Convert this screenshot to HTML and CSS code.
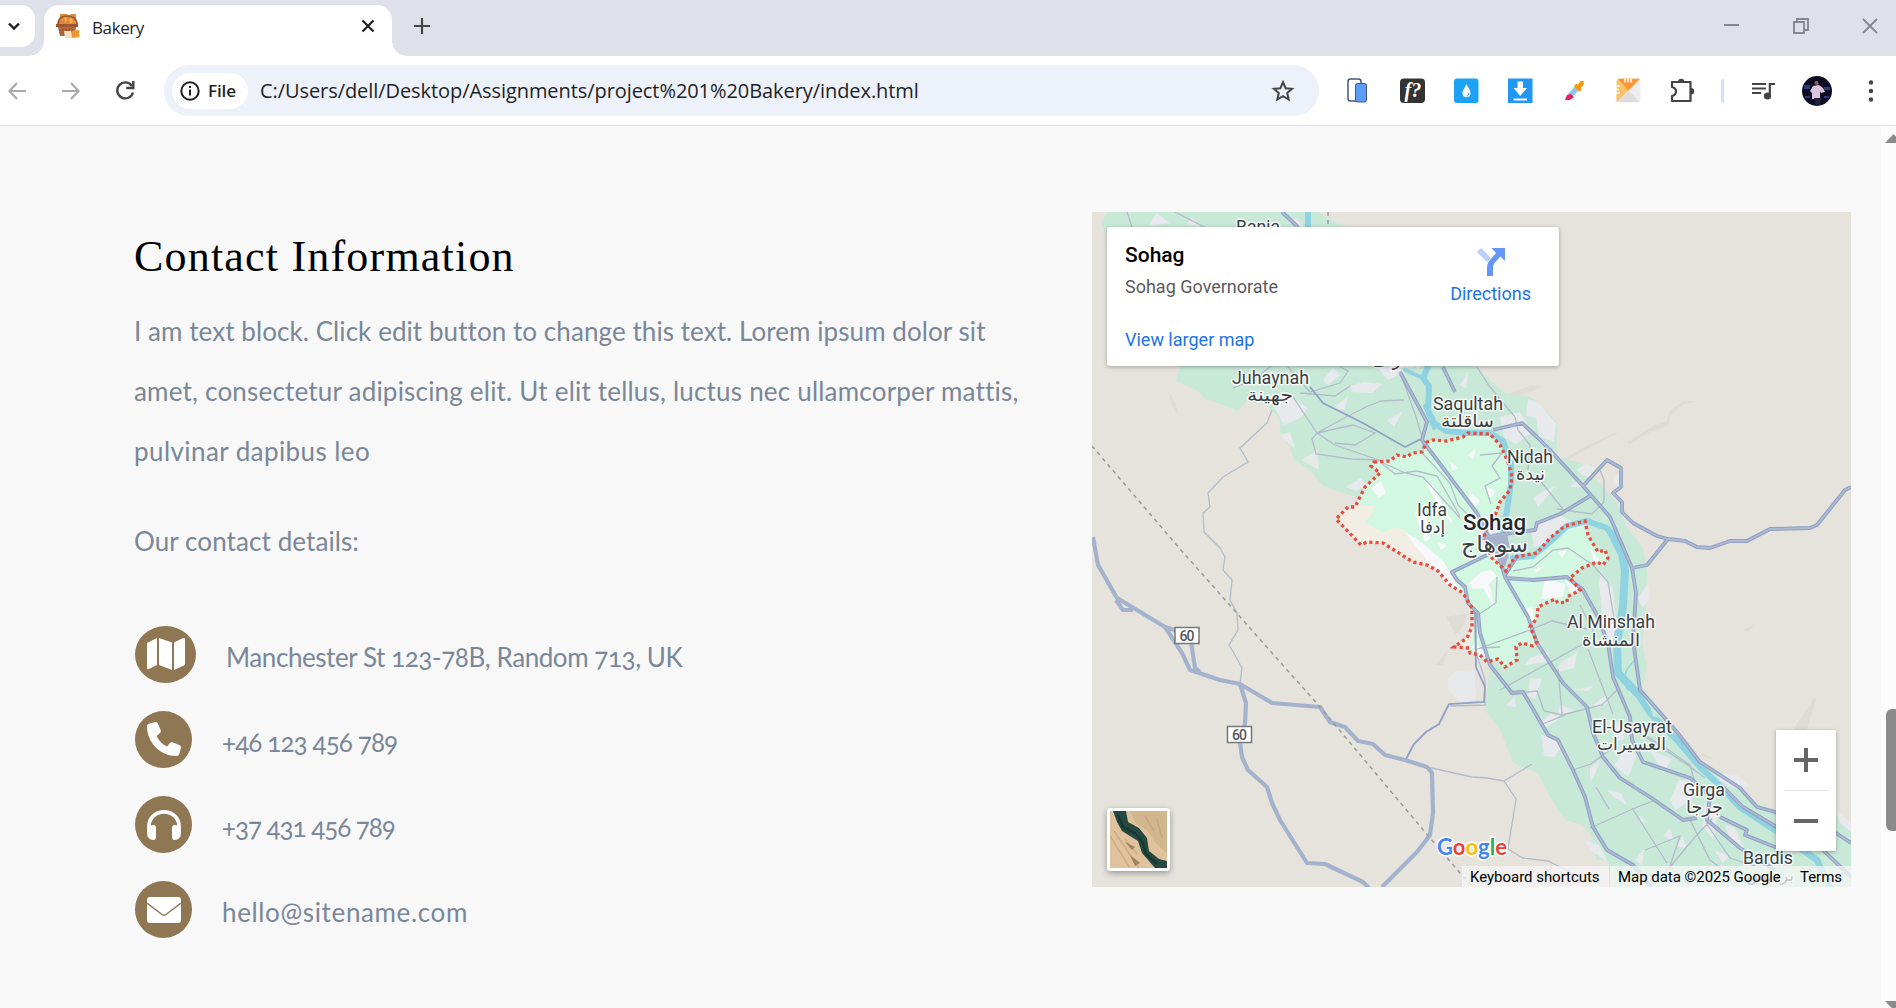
FILE: index.html
```html
<!DOCTYPE html>
<html lang="en">
<head>
<meta charset="utf-8">
<title>Bakery</title>
<link rel="stylesheet" href="styles.css">
</head>
<body>
<div class="browser">
  <header class="tabstrip">
    <div class="tab-search"><svg width="14" height="9" viewBox="0 0 14 9"><path d="M2 1.500 7 6.500 12 1.500" fill="none" stroke="#1f1f1f" stroke-width="2.400"/></svg></div>
    <div class="tab">
      <svg class="favicon" width="24" height="24" viewBox="0 0 24 24"><path d="M4 3 4 0h6l3 1 3-1h4v4l-1 3 2 6H1l2-6z" fill="#e08a3c"/><path d="M2 11C2 4 6 2 11 2s10 2 10 9" fill="none" stroke="#9c5630" stroke-width="1.700"/><path d="m8 4 2-1 1 3-2 3zm5 1 3-1 1 4-3 2z" fill="#f7b04a"/><path d="M0 10h22v3H0z" fill="#9c5630"/><path d="M2 13h18l-1 9H4z" fill="#b5683c"/><path d="M3 16h15M4 19h12" stroke="#8c4b2b" stroke-dasharray="2 1"/><path d="M8 17h8v7H9z" fill="#f4dfc3"/><path d="m15 17 8-1v7l-7 1z" fill="#f0942e"/></svg>
      <span class="tab-title">Bakery</span>
      <svg class="tab-close" width="14" height="14" viewBox="0 0 14 14"><path d="M1.500 1.500l11 11M12.500 1.500l-11 11" stroke="#1f1f1f" stroke-width="2.200"/></svg>
    </div>
    <svg class="new-tab" width="16" height="16" viewBox="0 0 16 16"><path d="M8 0v16M0 8h16" stroke="#444" stroke-width="2.200"/></svg>
    <div class="window-controls">
      <svg width="16" height="16" viewBox="0 0 16 16"><path d="M0 7h15" stroke="#85878c" stroke-width="2"/></svg>
      <svg width="16" height="16" viewBox="0 0 16 16"><path d="M1 4h10v11H1zM4 4V1h11v11h-4" fill="none" stroke="#85878c" stroke-width="1.800"/></svg>
      <svg width="16" height="16" viewBox="0 0 16 16"><path d="M1 1l14 14M15 1 1 15" stroke="#85878c" stroke-width="1.800"/></svg>
    </div>
  </header>

  <nav class="toolbar">
    <div class="nav-icons">
      <svg width="18" height="18" viewBox="0 0 18 18"><path d="M18 9H2M9 1 1.500 9 9 17" fill="none" stroke="#a9a9a9" stroke-width="2.200"/></svg>
      <svg width="18" height="18" viewBox="0 0 18 18"><path d="M0 9h16M9 1l7.500 8L9 17" fill="none" stroke="#a9a9a9" stroke-width="2.200"/></svg>
      <svg width="19" height="19" viewBox="0 0 19 19"><path d="M17 11.500A8 8 0 1 1 16 5" fill="none" stroke="#444" stroke-width="2.400"/><path d="M17.300 0v7h-7" fill="none" stroke="#444" stroke-width="2.400"/></svg>
    </div>
    <div class="omnibox">
      <div class="chip">
        <svg width="20" height="20" viewBox="0 0 20 20"><circle cx="10" cy="10" r="8.700" fill="none" stroke="#1f1f1f" stroke-width="2"/><path d="M10 8.500v6M10 5v2" stroke="#1f1f1f" stroke-width="2"/></svg>
        <span>File</span>
      </div>
      <span class="url">C:/Users/dell/Desktop/Assignments/project%201%20Bakery/index.html</span>
      <svg class="star" width="24" height="24" viewBox="0 0 24 24"><path d="m12 3.200 2.600 6 6.500.6-4.900 4.300 1.500 6.400-5.700-3.400-5.700 3.400 1.500-6.400L2.900 9.800l6.500-.6z" fill="none" stroke="#444" stroke-width="2"/></svg>
    </div>
    <div class="extensions">
      <svg width="26" height="26" viewBox="0 0 26 26"><rect x="2" y="1" width="13" height="22" rx="2.500" fill="#fff" stroke="#4a5478" stroke-width="1.500"/><rect x="9.500" y="5.500" width="11" height="18.500" rx="2" fill="#5a9cf8" stroke="#4a5478"/></svg>
      <svg width="26" height="26" viewBox="0 0 26 26"><rect x="0" y="0.500" width="25" height="24.500" rx="4" fill="#333"/><text x="4.500" y="19" class="ext-f">f?</text></svg>
      <svg width="26" height="26" viewBox="0 0 26 26"><rect x="0" y="0.500" width="24.500" height="24.500" rx="3" fill="#1da1f2"/><path d="M12.500 6c2 4.500 4 6 4 9a4 4.200 0 0 1-8 0c0-3 2-4.500 4-9z" fill="#fff"/><path d="M14.500 15a2 2 0 0 1-2 3" stroke="#1da1f2" fill="none"/></svg>
      <svg width="26" height="26" viewBox="0 0 26 26"><path d="M0 .5h24.500V25H0z" fill="#2196f3"/><path d="M9.500 3.500h5.500V10h4l-6.800 8L5.500 10h4zM5.500 20.500h13.500v2h-13.500z" fill="#fff"/></svg>
      <svg width="26" height="26" viewBox="0 0 26 26"><path d="m6 16 8-9 4 4-9 9z" fill="#8ec5f5"/><path d="m3 22 2-5 4-1 3 3-4 3z" fill="#e91e63"/><path d="m12 8 2-2 2 .5 2-3q4-2 4 1t-3 5l0 3-2 1z" fill="#ff9800"/></svg>
      <svg width="26" height="26" viewBox="0 0 26 26"><rect x=".5" y=".5" width="24" height="24" rx="3" fill="#eee"/><path d="M3 .5h21.500L.5 24.500V3z" fill="#ffc166"/><path d="m2 1 10.500 11.500L23.500 1z" fill="#f9963a"/><path d="M12.500 12.500 1.500 24h22z" fill="#ddd"/><path d="M9 1v3.500M12 1v3.500M15 1v3.500M0 8h4M0 11.500h3M0 15h4" stroke="#fff" stroke-width="1.500"/></svg>
      <svg width="26" height="26" viewBox="0 0 26 26"><path d="M2 4h18.500v19H2v-5q4-1 4-4.500T2 9z" fill="none" stroke="#444" stroke-width="2.200" stroke-linejoin="round"/><path d="M8 4a3.200 3.200 0 0 1 6.400 0zM21 10a3.200 3.200 0 0 1 0 6.400z" fill="#444"/></svg>
    </div>
    <span class="separator"></span>
    <svg class="media" width="24" height="20" viewBox="0 0 24 20"><path d="M0 3h14M0 7.500h14M0 12h9" stroke="#444" stroke-width="2"/><path d="M17.800 15V3H23" fill="none" stroke="#444" stroke-width="2.200"/><circle cx="15.500" cy="15" r="3.600" fill="#444"/></svg>
    <svg class="avatar" width="30" height="30" viewBox="0 0 30 30"><circle cx="15" cy="15" r="15" fill="#0c0b22"/><path d="M2 9h6v4H2zm20 2h6v3h-6zM3 20h5v2H3zm19 0h5v2h-5z" fill="#273c80"/><circle cx="14.500" cy="7" r="2" fill="#8e6251"/><path d="m11 10 6-1 4 3 2 4-4 1-1-2v8h-8v-6l-2-2z" fill="#dcc6df"/><path d="M12 22h7l-1 7h-4z" fill="#25233c"/></svg>
    <svg class="menu" width="6" height="22" viewBox="0 0 6 22"><circle cx="3" cy="2.500" r="2.200" fill="#444"/><circle cx="3" cy="11" r="2.200" fill="#444"/><circle cx="3" cy="19.500" r="2.200" fill="#444"/></svg>
  </nav>

  <main class="viewport">
    <section class="contact">
      <div class="info">
        <h1>Contact Information</h1>
        <p class="lead"><span class="l1">I am text block. Click edit button to change this text. Lorem ipsum dolor sit</span><br><span class="l2">amet, consectetur adipiscing elit. Ut elit tellus, luctus nec ullamcorper mattis,</span><br><span class="l3">pulvinar dapibus leo</span></p>
        <p class="details">Our contact details:</p>
        <ul class="list">
          <li><span class="badge wide"><svg width="40" height="34" viewBox="0 0 40 34"><path d="M1 6 11 1v27L3 32q-2 1-2-1zM13 1l13 4.500V33L13 28zM28 5.500 37 1q2-.6 2 1.500V28l-11 5z" fill="#fff"/></svg></span><span class="address">Manchester St 123-78B, Random 713, UK</span></li>
          <li><span class="badge"><svg width="34" height="34" viewBox="0 0 512 512"><path d="M165 25c-8-19-29-29-48-23L29 26C12 30 0 46 0 64c0 247 201 448 448 448 18 0 34-12 38-29l24-88c6-20-4-41-23-48l-96-40c-17-7-36-2-48 12l-40 49C233 335 177 279 144 209l49-40c14-12 19-31 12-48z" fill="#fff"/></svg></span><span class="phone">+46 123 456 789</span></li>
          <li><span class="badge"><svg width="34" height="30" viewBox="0 0 34 30"><path d="M2 22V16a15 14.200 0 0 1 30 0v6" fill="none" stroke="#fff" stroke-width="3.700"/><path d="M6.500 15q2.500 0 2.500 2.500v9.500q0 3-2.500 3Q0 30 0 22.500T6.500 15zM27.500 15q-2.500 0-2.500 2.500v9.500q0 3 2.500 3 6.500 0 6.500-7.500T27.500 15z" fill="#fff"/></svg></span><span class="hotline">+37 431 456 789</span></li>
          <li><span class="badge"><svg width="34" height="26" viewBox="0 0 34 26"><rect width="34" height="26" rx="3" fill="#fff"/><path d="m0 6 15 11.500q2 1.500 4 0L34 6" fill="none" stroke="#8e7752" stroke-width="1.400"/></svg></span><span class="email">hello@sitename.com</span></li>
        </ul>
      </div>

      <div class="map">
        <svg class="map-canvas" width="759" height="675" viewBox="1092 212 759 675">
          <defs>
            <path id="sohag" d="M1374 462l16-1 7-6 10 2 5-4 10-1 5-10 6-2 14 1 16-4 5-4 22 1 10 11 5 10 4 10 3 12-2 13-10 12-4 11-12 20 3 14 5 11 14 13 9-14 22-4 13-15 15-12 20-5 3 14 10 17 7-2 3 8-5 7-6-3-15 6-12 10 10 12-13 7v5l-9 1-3-4-17 8-1 11-7 9 7 15-4 4-11-3-6 4 1 13-12 7-7-8-11 3-7-7-10-2-1-5-15-1 13-9 5-11v-19l-9-15-13-8-12-14-11-6-14-3-30-19-16-1-6 3-25-26 12-12h7l10-20 15-14-9-7z"/>
          </defs>
          <path fill="#e5e3dc" d="M1092 212h759v675h-759z"/>
          <g fill="#dfdcd5">
            <path d="m1505 395 28-10 10 2-20 7-15 3zM1562 460l20-12 42-19-33 18-25 14zM1627 442l28-17 12-4 2-9 12-10 15-1-14 4-12 12-2 9-16 5-22 13zM1785 745l12-22 20-27-12 40-13 15zM1446 617l22-4-5 12-7 10zM1436 665l12-15-5 15z"/>
            <path d="m1168 390 8 15 2 10-6-10zM1742 805l33 5v8l-35-6zM1700 752l14 7-12-3zM1813 697l3 4-5 8zM1743 630l14-7-10 9z"/>
          </g>
          <!-- Nile valley farmland -->
          <path fill="#c9e9d8" d="M1101 223l6-11h211l25 15 60 60 57 55 17 25 10 10 18 16 25 4 13 10 14 16v34l23 6 17 17 20 23 10 24 16 21 4 19v33l-5 43 5 24-5 20 21 26 20 30 20 24 14 3 16 7 17 23 25 10 61 5 15 9v63H1613L1607 860 1597 860 1590 833 1582 825 1565 820 1550 797 1538 773 1513 763 1500 730 1485 710 1490 665 1500 600 1450 540 1385 480 1362 505 1355 497 1335 490 1322 485 1312 472 1294 460 1290 448 1280 432 1280 420 1268 406 1247 401 1238 411 1215 402 1205 399 1198 391 1176 381 1180 367z"/>
          <!-- gray settlement patches -->
          <g fill="#e7e9ec">
            <path d="m1149 226 7-13 14 10zM1187 224l5-7 8 9zM1287 223l9-5 8 9zM1273 405l12-12 23 15-8 10-16 7zM1280 435l10-3 5 17zM1302 460l15-10 2 20zM1346 487l15-9 5 8-10 5zM1323 380l10-12 7 7-12 10zM1350 386l14-4 18 2-10 9-20-1zM1334 408l14-12-4 14zM1387 420l15-8-8 15zM1378 368l20-2 6 6-16 8z"/>
            <path d="m1528 399 12 5 16 20-2 18-15-6-3-18-10-2zM1500 417l20-5 12 20-16 12-12-7zM1460 385l8-13-2 17zM1533 498l13-8 10-4-18 21zM1570 487l9-8 9 8zM1577 470l9-7 13 8-10 6-7-2zM1613 477l7-4-1 13-5-2zM1538 520l20-6 13 7-20 23-17 3-3-18z"/>
            <path d="m1643 590 5-7 2 15-7 10-5-10zM1601 572l12 17 3 32-14-8-3-30zM1602 617l15 3-2 32-15-22zM1560 664l17-12-3 16-17 4zM1530 658l20-7-5 11-20 3zM1530 678l12 1-7 20-7-3zM1507 704l7-7 2 10-9-1zM1540 722l12-9 6 7-13 8zM1541 735l10 2 12 8-9 12-10-1zM1593 705l12-9 3 6-10 6zM1608 720l10 2 7 17-8 3zM1573 690l20-4-5 5zM1560 705l14 5-18 7z"/>
            <path d="m1627 747 10 8-9 22-14-12zM1590 768l10-8-4 12-6 10zM1650 750l22 9-9 14zM1679 780l18 1-6 18-15 11-6-10zM1704 803l14 10-5 26-10-13zM1607 790l14 3 6 12-13-8zM1663 836l7-8 4 13zM1635 860l9-11-2 16zM1717 773l20 2 12 10-14 4-15-8zM1725 825l10 3 10 22-12-4zM1676 846l7-10 3 12zM1714 850l15 6-6 7zM1584 840l15 5 9 17-15-10zM1640 815l8 8-9-2zM1837 811l14 11v10l-12-10z"/>
            <path d="m1448 678 8-7 18-1 2 30-14 3-14-14z"/>
          </g>
          <!-- highlighted city area -->
          <use href="#sohag" fill="#d2f8e2"/>
          <path fill="#f3eee3" d="m1336 519 12-12 26-2-2 8-7 9 7 4 11 7 12-6 9 3 11 12 15 13 20 25-12-9-11-6-14-3-30-19-16-1-6 3zM1472 615v12l-5 11-13 9 15 1 6-23z"/>
          <g fill="#f7f8f9">
            <path d="m1371 488 10-7 5 12-7 5zM1405 532l14 8 25 22 26 45-9-14-13-8-12-14-15-18zM1415 513l10-4 5 30-5 3zM1468 455l8-7-3 12zM1450 461l8 7-6 3zM1470 492l10 9-5 6-6-9zM1487 487l9 4-7 8zM1425 480l8 6 20 37-12-10zM1437 542l10 3-6 5zM1468 584l13-12 10-2 6 6-12 12-12 1zM1483 579l8 10 3 19-11-20zM1545 579l20 5-2 13-22 2zM1522 610l10-3 3 13-6 5zM1558 552l9-2-5 8zM1533 570l12-4-9 7zM1475 642l12 14-8 3-7-12zM1565 580l16 9-10 4zM1590 548l10 13-6 2z"/>
          </g>
          <path fill="#e7e9ec" d="m1482 515 14 5 8 20-2 26-18-18-8-20z"/>
          <!-- river -->
          <g fill="none" stroke="#8fd3e3" stroke-linecap="round" stroke-linejoin="round">
            <path stroke-width="6" d="M1308 212v15M1428 367l-5 11 6 8-1 24 6 13 12 8 20 2h24l13 8 8 22v21l-4 26-4 24"/>
            <path stroke-width="4" d="M1405 370l18 8M1503 541l4 16M1425 406l9 22"/>
            <path stroke-width="6" d="M1513 558l20-2 17-14 17-16 20-5 20 7 12 17"/>
            <path stroke-width="8" d="M1612 534l10 20 3 16-2 37-6 36 1 30 19 20"/>
            <path stroke-width="6.500" d="M1618 673l19 20 13 20 27 27 23 27 17 16 23 24 35 23 42 30 14 30"/>
            <path stroke-width="1.500" d="M1635 660c-10 9-14 20-7 30"/>
          </g>
          <path d="m1650 706 8 12-5-2z" fill="#c9e9d8"/>
          <!-- minor roads -->
          <g fill="none" stroke="#b3bccb" stroke-width="1.300">
            <path d="M1127 212l5 15M1175 212l35 18M1272 410l-5 13-27 25 8 14-25 15-15 16 2 14-7 6 1 19 16 16 5 9-2 13 9 10-2 20 7 13 1 17-9 15 6 10 7 13-2 15M1233 388l20-8 17-13 12-8 16 20 12 13 30-9 8-12-17-9M1293 397l24 36 18 12 38 13 32 15 18 4 37 41M1317 433l27-15 22-11 15-6 23-1M1317 433l-5 6 4 15 35 5 30 1M1335 443l20 2 20-12-22-8-36 8M1300 393l35 3 15-10M1400 372l15 42 8 26M1423 440v14l27 29 8 22 10 10M1380 462l15 12 22-3 20 5 23 40"/>
            <path d="M1477 367l13 20 25 30 3 13 12 15-2 25M1480 455l22-2-10 13 8 12-15 8 6 18M1538 478l25 31M1600 470l4 10v22l-12 12-35-5M1513 571l20-4 20-17 15-2 25 17 15 17 6 36M1497 577l-1 26-18 12M1475 650l55-20 22-9 35 8M1476 612v40l9 28v25l-35 1M1480 648l20-1M1500 690l83-46M1588 649l25 65M1558 669l4 45M1510 694l27-3 7 20 18 4 40-10 16-16M1540 725l25-10M1580 605l15 30M1573 770l18-6 20-15M1590 828l45-20 18-7M1632 808l35 55M1650 887l20-20 25-30 17-18M1690 820l20 40 20 15M1706 823l24 35 25 8M1645 850l35-14-10 30 20 20M1596 787l13 22"/>
            <path d="M1427 767l45 10 15 1 17 3 28-17M1504 781l12 18-8 50 15 9 25 3 20 10 12 13M1645 735l25 16 20 14 5 18M1685 763l20 15M1635 730l60 40"/>
          </g>
          <g fill="none" stroke="#8fa2c6" stroke-width="1.800">
            <path d="M1310 387l13 16 40 20 42 24 18-9M1475 612l1 55 9 20-1 15-35 2-10 20-13 8-12 12-9 17"/>
          </g>
          <!-- highways -->
          <g fill="none" stroke="#a4b3cd" stroke-width="4.200" stroke-linejoin="round">
            <path d="M1093 537l5 28 19 33 48 29 17 26 8 17 30 10 20 4 32 19 48 4 10 15 15 5 13 14 15 3 12 11 20 5 22 7 5 6 1 40-3 22-13 17-35 35M1116 600l7 10h10M1165 627l25 8 5 33 5 4M1240 684l6 19-1 20-5 20 2 14 6 13 19 17 5 16 8 17 27 43 18 1 38 18 6 6"/>
          </g>
          <!-- main roads, drawn as an edge colour with a lighter core -->
          <defs>
            <g id="roads" fill="none" stroke-linejoin="round">
              <path d="M1851 487l-6 3-28 35-7 3-40 1-23 12h-17l-20 7-13-1-12-6-17-2-11-3-24-13-11-11v-10l-9-9 8-6v-19l-14-8-24 26M1668 539l-21 26-15 3M1493 430l29-7 15 14 13 13 33 36 27 31 13 30 9 21 4 25-3 47 7 50 37 42 23 30 40 26 17 19 18 5 61 21 15 10M1590 496l-30 18-23 9-2 7-38 5-18 4"/>
              <path d="M1282 212l16 15M1400 372l27 50-5 18 55 73 23 47 5 17 23 40 9 26 26 40 24 24 6 26 10 24 17 21 30 19 33 23 14-2M1443 367l12 25"/>
              <path d="M1487 555l-35 17 5 8 8 7 3 16 10 10 2 20 10 32 22 28 11-1 25 43 10 5 15 30 12 27 8 30 14 23 26 15 18 22M1505 578l28 2 34-3 16 13 14 25 11 28 5 34 17 40 2 23 11 22 47 16 20 18-3 24 33 28 35 22M1720 817l27 13-2 5 35 14M1723 787l20 20 37 22M1823 850l28 27M1505 575l13-20"/>
            </g>
          </defs>
          <use href="#roads" stroke="#8fa0c4" stroke-width="3.800"/>
          <use href="#roads" stroke="#aebad2" stroke-width="1.800"/>
          <path d="m1487 537 20-3 3 15-5 18-8-12z" fill="#a6b1cb"/>
          <path fill="none" stroke="#979a9d" stroke-width="1.500" stroke-dasharray="4 4" d="M1092 446l88 103 140 158 110 131 42 49M1328 212v15"/>
          <use href="#sohag" class="city-border"/>
          <!-- place names -->
          <g class="place">
            <text x="1236" y="233" textLength="44" lengthAdjust="spacingAndGlyphs">Banja</text>
            <text x="1371" y="366" textLength="49" lengthAdjust="spacingAndGlyphs">أشراف</text>
            <text x="1232" y="384" textLength="77" lengthAdjust="spacingAndGlyphs">Juhaynah</text>
            <text x="1247" y="401" textLength="46" lengthAdjust="spacingAndGlyphs">جهينة</text>
            <text x="1433" y="410" textLength="70" lengthAdjust="spacingAndGlyphs">Saqultah</text>
            <text x="1441" y="427" textLength="53" lengthAdjust="spacingAndGlyphs">ساقلتة</text>
            <text x="1507" y="463" textLength="46" lengthAdjust="spacingAndGlyphs">Nidah</text>
            <text x="1516" y="480" textLength="29" lengthAdjust="spacingAndGlyphs">نيدة</text>
            <text x="1417" y="516" textLength="30" lengthAdjust="spacingAndGlyphs">Idfa</text>
            <text x="1420" y="533" textLength="25" lengthAdjust="spacingAndGlyphs">إدفا</text>
            <text class="city" x="1463" y="530" textLength="63" lengthAdjust="spacingAndGlyphs">Sohag</text>
            <text class="city-ar" x="1461" y="552" textLength="67" lengthAdjust="spacingAndGlyphs">سوهاج</text>
            <text x="1567" y="628" textLength="88" lengthAdjust="spacingAndGlyphs">Al Minshah</text>
            <text x="1582" y="646" textLength="58" lengthAdjust="spacingAndGlyphs">المنشاة</text>
            <text x="1592" y="733" textLength="80" lengthAdjust="spacingAndGlyphs">El-Usayrat</text>
            <text x="1597" y="750" textLength="69" lengthAdjust="spacingAndGlyphs">العسيرات</text>
            <text x="1683" y="796" textLength="42" lengthAdjust="spacingAndGlyphs">Girga</text>
            <text x="1686" y="813" textLength="37" lengthAdjust="spacingAndGlyphs">جرجا</text>
            <text x="1743" y="864" textLength="50" lengthAdjust="spacingAndGlyphs">Bardis</text>
            <text x="1746" y="881" textLength="48" lengthAdjust="spacingAndGlyphs">برديس</text>
          </g>
          <g class="shield">
            <rect x="1175" y="627.500" width="24" height="16"/><text x="1179.500" y="641" textLength="15">60</text>
            <rect x="1227.500" y="726.500" width="24" height="16"/><text x="1232" y="740" textLength="15">60</text>
          </g>
          <text class="logo" x="1437" y="855" textLength="70" lengthAdjust="spacingAndGlyphs"><tspan fill="#4285f4">G</tspan><tspan fill="#ea4335">o</tspan><tspan fill="#fbbc04">o</tspan><tspan fill="#4285f4">g</tspan><tspan fill="#34a853">l</tspan><tspan fill="#ea4335">e</tspan></text>
        </svg>

        <div class="place-card">
          <div class="place-text">
            <strong>Sohag</strong>
            <span class="region">Sohag Governorate</span>
            <a class="larger">View larger map</a>
          </div>
          <div class="directions">
            <svg width="28" height="28" viewBox="0 0 28 28"><path d="M4 0 0 4l10 10 4-4z" fill="#b7cffc"/><path d="M14.500 0H28v13l-4.500-4.500-6.500 7Q16 17 16 20v8h-6v-9q0-4 3-7l6-7z" fill="#6796fb"/></svg>
            <a>Directions</a>
          </div>
        </div>

        <div class="layer-button"><svg width="57" height="57" viewBox="0 0 57 57"><path d="M0 0h57v57H0z" fill="#e0c39c"/><path d="M20 0h37v43L44 30 37 19 26 13z" fill="#d2b78e"/><path d="M0 25 20 57M4 20l25 37M15 28l12 15M35 5l9 15M47 8l5 19" stroke="#b8986e" stroke-width="1.500" opacity=".5"/><path d="m15 31 10 5-3 3zM20 44l10 8-5 3z" fill="#9e835f"/><path d="M3 0h13l2 11 11 6 8 10 2 13 10 8 8 2v7H45L32 42l-4-12-16-10-5-9z" fill="#254840"/><path d="m8 4 5 12 12 6 8 10 3 11 11 10" fill="none" stroke="#173630" stroke-width="2"/></svg></div>

        <div class="zoom">
          <svg width="60" height="60" viewBox="0 0 60 60"><path d="M30 18v24M18 30h24" stroke="#666" stroke-width="4"/></svg>
          <span class="rule"></span>
          <svg width="60" height="60" viewBox="0 0 60 60"><path d="M18 30h24" stroke="#666" stroke-width="4"/></svg>
        </div>

        <div class="attribution">
          <span class="keys">Keyboard shortcuts</span>
          <span class="data">Map data ©2025 Google</span>
          <span class="terms">Terms</span>
        </div>
      </div>
    </section>
    <aside class="scrollbar">
      <svg width="15" height="882" viewBox="0 0 15 882"><path d="M4 17 12.500 8 21 17zM4 875h17l-8.500 9z" fill="#8b8b8b"/><rect x="5" y="583" width="14" height="122" rx="6" fill="#8b8b8b"/></svg>
    </aside>
  </main>
</div>
</body>
</html>
```
FILE: styles.css
```css
* { box-sizing: border-box; }
body { margin: 0; background: #f8f8f8; overflow: hidden; }
svg { display: block; flex: none; }
.browser { width: 1896px; height: 1008px; display: flex; flex-direction: column; font-family: "Open Sans", "Noto Sans", sans-serif; color: #1f1f1f; }

.tabstrip { height: 56px; background: #dee1e9; display: flex; align-items: flex-start; padding-top: 5px; }
.tab-search { width: 35px; height: 42px; background: #fff; border-radius: 0 14px 14px 0; display: flex; align-items: center; padding-left: 7px; }
.tab { position: relative; width: 348px; height: 51px; margin-left: 9px; background: #fff; border-radius: 15px 15px 0 0; display: flex; align-items: center; padding: 0 17px 9px 12px; }
.tab::before, .tab::after { content: ""; position: absolute; bottom: 0; width: 15px; height: 15px; }
.tab::before { left: -15px; background: radial-gradient(circle at 0 0, transparent 14.5px, #fff 15px); }
.tab::after { right: -15px; background: radial-gradient(circle at 100% 0, transparent 14.5px, #fff 15px); }
.tab-title { margin-left: 12px; font-size: 17px; letter-spacing: -.4px; padding-top: 2px; }
.tab-close { margin-left: auto; }
.new-tab { margin: 13px 0 0 22px; }
.window-controls { margin: 13px 18px 0 auto; display: flex; gap: 53px; }

.toolbar { height: 70px; background: #fff; border-bottom: 1px solid #dfdfe0; display: flex; align-items: center; }
.nav-icons { display: flex; align-items: center; gap: 36px; padding-left: 8px; width: 164px; }
.omnibox { width: 1155px; height: 51px; border-radius: 26px; background: #ecf1fa; display: flex; align-items: center; padding: 0 24px 0 8px; }
.chip { width: 76px; height: 36px; border-radius: 18px; background: #fff; display: flex; align-items: center; padding-left: 8px; gap: 8px; font-size: 17px; font-weight: 600; letter-spacing: -.1px; }
.url { margin-left: 12px; font-size: 20px; letter-spacing: -.07px; white-space: nowrap; }
.star { margin-left: auto; }
.extensions { display: flex; gap: 28px; margin-left: 27px; }
.ext-f { font: italic bold 20px "Liberation Serif", serif; fill: #fff; }
.separator { width: 3px; height: 24px; border-radius: 2px; background: #d0e1fb; margin-left: 25px; }
.media { margin-left: 28px; }
.avatar { margin-left: 26px; }
.menu { margin-left: 36px; }

.viewport { flex: 1; display: flex; background: #f8f8f8; }
.contact { width: 1881px; display: flex; padding: 86px 0 0 134px; }
.info { width: 958px; font-family: Lato, sans-serif; font-size: 26px; color: #7a8799; padding-top: 15px; }
h1 { margin: 0; font: 400 44px/60px "Liberation Serif", serif; color: #000; letter-spacing: 1.2px; white-space: nowrap; }
p { margin: 0; line-height: 60px; white-space: nowrap; }
.lead { margin-top: 14px; }
.l1 { letter-spacing: .07px; }
.l2 { letter-spacing: .2px; }
.l3 { letter-spacing: .42px; }
.details { margin-top: 30px; letter-spacing: .09px; }
.list { list-style: none; margin: 54.500px 0 0; padding: 0 0 0 1px; display: grid; gap: 28.300px; font-variant-numeric: oldstyle-nums; }
.list li { height: 57px; display: flex; align-items: center; white-space: nowrap; }
.list li > span:last-child { padding-top: 5px; }
.address { letter-spacing: -.43px; }
.phone { letter-spacing: -.88px; }
.hotline { letter-spacing: -1.05px; }
.email { letter-spacing: .64px; }
.badge { width: 57px; height: 57px; border-radius: 50%; background: #8e7752; display: flex; align-items: center; justify-content: center; margin-right: 30px; }
.badge.wide { width: 61px; margin-right: 30px; }

.map { position: relative; width: 759px; height: 675px; overflow: hidden; font-family: Roboto, sans-serif; }
.map-canvas { font-family: Roboto, "DejaVu Sans", sans-serif; }
.city-border { fill: none; stroke: #e94b3e; stroke-width: 3.300; stroke-dasharray: 3.200 3; }
.place text { font-size: 17.500px; fill: #3c4043; stroke: #fff; stroke-width: 3px; stroke-opacity: .85; paint-order: stroke; stroke-linejoin: round; }
.place .city { font-size: 22px; font-weight: 500; fill: #25282b; }
.place .city-ar { font-size: 22px; }
.shield rect { fill: #fff; stroke: #75777a; stroke-width: 1.500; }
.shield text { font-size: 14px; fill: #55585c; font-weight: 500; }
.logo { font: 700 22.500px Lato, sans-serif; stroke: #fff; stroke-width: 3px; paint-order: stroke; }

.place-card { position: absolute; left: 15px; top: 15px; width: 452px; height: 139px; background: #fff; border-radius: 3px; box-shadow: 0 1px 4px rgba(0,0,0,.3); display: flex; justify-content: space-between; padding: 14px 28px 0 18px; font-size: 18px; }
.place-text { display: flex; flex-direction: column; }
.place-text strong { font-size: 21px; line-height: 28px; font-weight: 500; color: #000; }
.region { color: #5b5b5b; line-height: 22px; margin-top: 7px; }
.larger { line-height: 22px; margin-top: 31px; }
.place-card a { color: #1a73e8; }
.directions { display: flex; flex-direction: column; align-items: center; padding-top: 7px; }
.directions a { line-height: 22px; margin-top: 7px; }

.layer-button { position: absolute; left: 15px; top: 596px; border: 3px solid #fff; border-radius: 4px; box-shadow: 0 2px 6px rgba(0,0,0,.35); }
.zoom { position: absolute; left: 684px; top: 518px; width: 60px; height: 121px; background: #fff; box-shadow: 0 1px 4px rgba(0,0,0,.3); }
.rule { display: block; width: 45px; height: 1px; margin: 0 auto; background: #e3e3e3; }
.attribution { position: absolute; right: 0; bottom: 0; height: 21px; display: flex; font-size: 15px; line-height: 22px; letter-spacing: -.03px; color: #000; white-space: nowrap; }
.attribution span { background: rgba(245,245,245,.75); }
.keys { width: 147px; padding-left: 8px; margin-right: 1px; }
.data { width: 181px; padding-left: 8px; }
.terms { width: 60px; padding-left: 9px; }

.scrollbar { width: 15px; background: #fcfcfc; }
```
